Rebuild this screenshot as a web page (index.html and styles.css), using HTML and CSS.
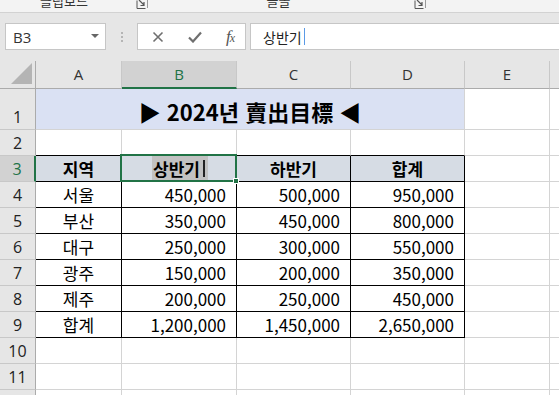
FILE: index.html
```html
<!DOCTYPE html>
<html lang="ko">
<head>
<meta charset="utf-8">
<link rel="stylesheet" href="styles.css">
</head>
<body>
<div class="ribbon">
  <div class="rgroup g1">
    <span class="rlabel">클립보드</span>
    <svg class="launcher" width="13" height="9" viewBox="0 0 13 9"><path d="M1 0.5V8.5H9.5" fill="none" stroke="#555" stroke-width="1"/><path d="M3 0 L8 5 M8 2 V5.5 H4.5" fill="none" stroke="#555" stroke-width="1.2"/><path d="M11.5 0V8" stroke="#999" stroke-width="1"/></svg>
  </div>
  <div class="rgroup g2">
    <span class="rlabel">글꼴</span>
    <svg class="launcher" width="13" height="9" viewBox="0 0 13 9"><path d="M1 0.5V8.5H9.5" fill="none" stroke="#555" stroke-width="1"/><path d="M3 0 L8 5 M8 2 V5.5 H4.5" fill="none" stroke="#555" stroke-width="1.2"/><path d="M11.5 0V8" stroke="#999" stroke-width="1"/></svg>
  </div>
</div>

<div class="fbar">
  <div class="namebox">
    <span class="nb-text">B3</span>
    <svg width="8" height="5" viewBox="0 0 8 5"><path d="M0 0H8L4 4Z" fill="#666"/></svg>
  </div>
  <div class="grip"><i></i><i></i><i></i></div>
  <div class="fbtns">
    <svg width="12" height="12" viewBox="0 0 12 12"><path d="M1.5 1.5L10.5 10.5M10.5 1.5L1.5 10.5" stroke="#6f6f6f" stroke-width="1.6"/></svg>
    <svg width="14" height="12" viewBox="0 0 14 12"><path d="M1 6.5L5 10.5L13 1.5" fill="none" stroke="#6f6f6f" stroke-width="2.2"/></svg>
    <span class="fx">f<small>x</small></span>
  </div>
  <div class="finput">상반기<span class="fcursor"></span></div>
</div>

<div class="sheet">
  <div class="corner"><svg width="22" height="22" viewBox="0 0 22 22"><path d="M21 0V21H0Z" fill="#b4b4b4"/></svg></div>
  <div class="ch">A</div>
  <div class="ch sel">B</div>
  <div class="ch">C</div>
  <div class="ch">D</div>
  <div class="ch">E</div>
  <div class="ch last"></div>

  <div class="rh">1</div>
  <div class="c title">▶ 2024년 賣出目標 ◀</div>
  <div class="c"></div><div class="c last"></div>

  <div class="rh">2</div>
  <div class="c tb"></div><div class="c tb"></div><div class="c tb"></div><div class="c tb"></div><div class="c"></div><div class="c last"></div>

  <div class="rh sel">3</div>
  <div class="c t hd">지역</div>
  <div class="c t hd active"><span class="edit">상반기<i class="cur"></i></span><span class="selbox"></span><span class="handle"></span></div>
  <div class="c t hd">하반기</div>
  <div class="c t hd">합계</div>
  <div class="c"></div><div class="c last"></div>

  <div class="rh">4</div>
  <div class="c t ctr">서울</div><div class="c t num">450,000</div><div class="c t num">500,000</div><div class="c t num">950,000</div><div class="c"></div><div class="c last"></div>

  <div class="rh">5</div>
  <div class="c t ctr">부산</div><div class="c t num">350,000</div><div class="c t num">450,000</div><div class="c t num">800,000</div><div class="c"></div><div class="c last"></div>

  <div class="rh">6</div>
  <div class="c t ctr">대구</div><div class="c t num">250,000</div><div class="c t num">300,000</div><div class="c t num">550,000</div><div class="c"></div><div class="c last"></div>

  <div class="rh">7</div>
  <div class="c t ctr">광주</div><div class="c t num">150,000</div><div class="c t num">200,000</div><div class="c t num">350,000</div><div class="c"></div><div class="c last"></div>

  <div class="rh">8</div>
  <div class="c t ctr">제주</div><div class="c t num">200,000</div><div class="c t num">250,000</div><div class="c t num">450,000</div><div class="c"></div><div class="c last"></div>

  <div class="rh">9</div>
  <div class="c t ctr">합계</div><div class="c t num">1,200,000</div><div class="c t num">1,450,000</div><div class="c t num">2,650,000</div><div class="c"></div><div class="c last"></div>

  <div class="rh">10</div>
  <div class="c"></div><div class="c"></div><div class="c"></div><div class="c"></div><div class="c"></div><div class="c last"></div>

  <div class="rh">11</div>
  <div class="c"></div><div class="c"></div><div class="c"></div><div class="c"></div><div class="c"></div><div class="c last"></div>

  <div class="rh"></div>
  <div class="c"></div><div class="c"></div><div class="c"></div><div class="c"></div><div class="c"></div><div class="c last"></div>
</div>
</body>
</html>
```

FILE: styles.css
```css
* { box-sizing: border-box; }
html, body { margin: 0; padding: 0; }
body {
  width: 559px;
  height: 395px;
  overflow: hidden;
  background: #ffffff;
  font-family: "Noto Sans CJK KR", "Noto Sans", sans-serif;
  color: #000;
}

/* ribbon strip (cut off at the top of the shot) */
.ribbon {
  height: 13px;
  background: #f3f3f3;
  border-bottom: 1px solid #d2d2d2;
  display: flex;
  overflow: hidden;
}
.rgroup {
  display: flex;
  align-items: flex-end;
  height: 12px;
}
.g1 { width: 151px; }
.g2 { width: 278px; }
.rlabel {
  flex: 1;
  text-align: center;
  font-size: 13px;
  line-height: 13px;
  margin: 0 8px 5px 0;
  color: #333;
  white-space: nowrap;
}
.launcher { align-self: flex-start; margin-right: 2px; }

/* formula bar */
.fbar {
  height: 48px;
  background: #e6e6e6;
  display: flex;
  align-items: flex-start;
  padding: 10px 0 0 5px;
}
.namebox {
  width: 101px;
  height: 27px;
  background: #fff;
  border: 1px solid #c6c6c6;
  display: flex;
  align-items: center;
  justify-content: space-between;
  padding: 0 6px 0 7px;
}
.nb-text {
  font-family: "Open Sans", "Noto Sans", sans-serif;
  font-size: 15px;
  color: #333;
}
.grip {
  width: 31px;
  height: 27px;
  display: flex;
  flex-direction: column;
  align-items: center;
  justify-content: center;
  gap: 2px;
}
.grip i {
  width: 2px;
  height: 2px;
  background: #b5b5b5;
  display: block;
}
.fbtns {
  width: 109px;
  height: 27px;
  background: #fff;
  border: 1px solid #c6c6c6;
  display: flex;
  align-items: center;
  justify-content: space-between;
  padding: 0 11px 0 14px;
}
.fx {
  font-family: "Liberation Serif", serif;
  font-style: italic;
  font-size: 17px;
  color: #555;
  letter-spacing: -1px;
  line-height: 1;
}
.fx small { font-size: 12px; }
.finput {
  flex: 1;
  margin-left: 4px;
  height: 27px;
  background: #fff;
  border: 1px solid #c6c6c6;
  border-right: none;
  display: flex;
  align-items: center;
  padding-left: 12px;
  font-size: 14px;
  color: #222;
}
.fcursor {
  width: 1px;
  height: 17px;
  background: #5a9ae6;
  margin-left: 2px;
}

/* sheet */
.sheet {
  display: grid;
  grid-template-columns: 36px 86px 115px 114px 114px 85px 1fr;
  grid-template-rows: 28px 41px repeat(12, 26px);
  font-size: 17px;
}
.corner {
  background: #e6e6e6;
  border-right: 1px solid #ababab;
  border-bottom: 1px solid #ababab;
  display: flex;
  align-items: flex-end;
  justify-content: flex-end;
  padding: 0 2px 3px 0;
}
.ch {
  background: #e6e6e6;
  border-right: 1px solid #c8c8c8;
  border-bottom: 1px solid #ababab;
  display: flex;
  align-items: center;
  justify-content: center;
  font-family: "Open Sans", "Noto Sans", sans-serif;
  font-size: 15px;
  color: #333;
  padding-bottom: 1px;
}
.ch.sel {
  background: #d2d2d2;
  color: #217346;
  border-bottom: 2px solid #217346;
}
.ch.last { border-right: none; }
.rh {
  background: #e6e6e6;
  border-right: 1px solid #ababab;
  border-bottom: 1px solid #c8c8c8;
  display: flex;
  align-items: flex-end;
  justify-content: center;
  font-family: "Open Sans", "Noto Sans", sans-serif;
  font-size: 16px;
  line-height: 22px;
  color: #222;
  padding-bottom: 1px;
}
.rh.sel {
  background: #d2d2d2;
  color: #217346;
  border-right: 2px solid #217346;
}
.c {
  border-right: 1px solid #d4d4d4;
  border-bottom: 1px solid #d4d4d4;
  display: flex;
  align-items: flex-end;
  line-height: 24px;
  white-space: nowrap;
}
.c.last { border-right: none; }
.title {
  grid-column: span 4;
  background: #dae1f3;
  justify-content: center;
  font-size: 22px;
  font-weight: 700;
  line-height: 34px;
  padding-bottom: 1px;
}
.tb { border-bottom-color: #000; }
.t { border-right-color: #000; border-bottom-color: #000; }
.hd {
  background: #d6dce4;
  justify-content: center;
  font-weight: 700;
}
.ctr { justify-content: center; }
.num {
  justify-content: flex-end;
  padding-right: 10px;
}
.active {
  position: relative;
  align-items: stretch;
}
.edit {
  display: flex;
  align-items: flex-end;
  background: #c2c2c2;
  padding: 0 3px 0 1px;
  margin-left: 2px;
}
.cur {
  display: block;
  width: 2px;
  height: 17px;
  background: #222;
  margin: 0 0 4px 3px;
}
.selbox {
  position: absolute;
  left: -2px;
  top: -2px;
  width: 117px;
  height: 28px;
  border: 2px solid #217346;
  pointer-events: none;
}
.handle {
  position: absolute;
  left: 111px;
  top: 22px;
  width: 6px;
  height: 6px;
  background: #217346;
  border: 1px solid #fff;
}
```
